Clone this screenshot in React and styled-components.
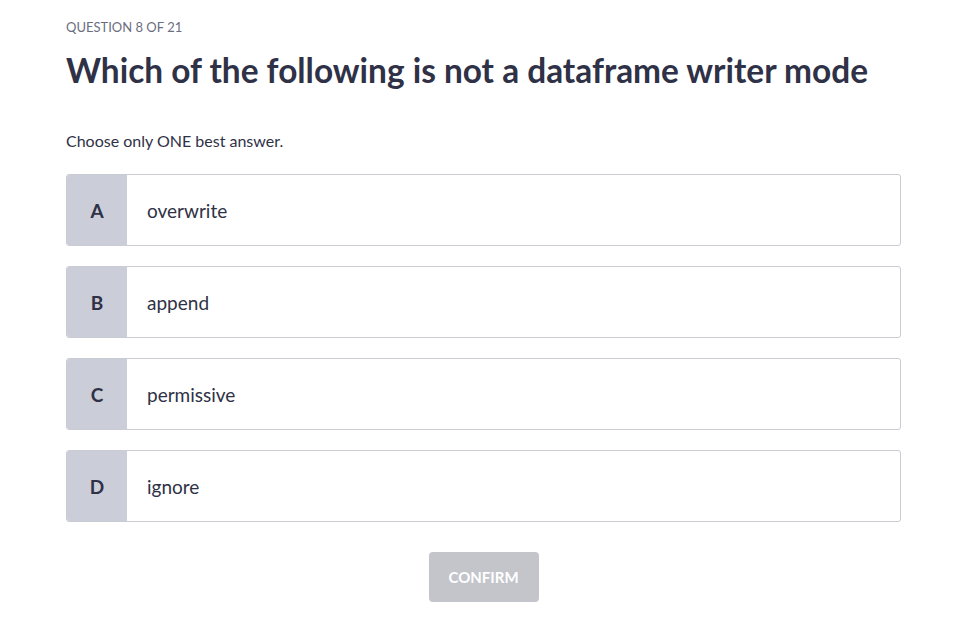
import React, { useState } from 'react';
import styled, { createGlobalStyle } from 'styled-components';

const GlobalStyle = createGlobalStyle`
  body {
    margin: 0;
    background: #ffffff;
    font-family: Lato, "Noto Sans", sans-serif;
  }
`;

const Page = styled.div`
  width: 835px;
  padding: 18px 0 0 66px;
`;

const Counter = styled.div`
  font-size: 13px;
  color: #6b6e80;
  text-transform: uppercase;
  line-height: 18px;
`;

const Title = styled.h1`
  margin: 14px 0 0;
  font-size: 33.4px;
  font-weight: 700;
  color: #2f3146;
  line-height: 40px;
`;

const Hint = styled.p`
  margin: 41px 0 0;
  font-size: 16px;
  color: #2f3146;
  line-height: 20px;
`;

const Options = styled.div`
  display: flex;
  flex-direction: column;
  gap: 20px;
  margin-top: 23px;
`;

const Option = styled.button`
  display: flex;
  align-items: stretch;
  height: 72px;
  padding: 0;
  border: 1px solid #c9cbd5;
  border-radius: 3px;
  background: ${p => (p.selected ? '#eef0f7' : '#ffffff')};
  overflow: hidden;
  cursor: pointer;
  font-family: inherit;
  text-align: left;
`;

const Letter = styled.span`
  display: flex;
  align-items: center;
  justify-content: center;
  width: 60px;
  background: #cbcdd8;
  font-size: 19px;
  font-weight: 700;
  color: #2f3146;
`;

const Label = styled.span`
  display: flex;
  align-items: center;
  padding-left: 20px;
  font-size: 19px;
  color: #2f3146;
`;

const Footer = styled.div`
  display: flex;
  justify-content: center;
  margin-top: 30px;
`;

const ConfirmButton = styled.button`
  width: 110px;
  height: 50px;
  border: none;
  border-radius: 4px;
  background: #c4c5cb;
  color: #ffffff;
  font-family: inherit;
  font-size: 15px;
  font-weight: 700;
  text-transform: uppercase;
`;

const answers = [
  { key: 'A', text: 'overwrite' },
  { key: 'B', text: 'append' },
  { key: 'C', text: 'permissive' },
  { key: 'D', text: 'ignore' },
];

const App = () => {
  const [selected, setSelected] = useState(null);

  return (
    <>
      <GlobalStyle />
      <Page>
        <Counter>Question 8 of 21</Counter>
        <Title>Which of the following is not a dataframe writer mode</Title>
        <Hint>Choose only ONE best answer.</Hint>
        <Options>
          {answers.map(a => (
            <Option key={a.key} selected={selected === a.key} onClick={() => setSelected(a.key)}>
              <Letter>{a.key}</Letter>
              <Label>{a.text}</Label>
            </Option>
          ))}
        </Options>
        <Footer>
          <ConfirmButton disabled={!selected}>Confirm</ConfirmButton>
        </Footer>
      </Page>
    </>
  );
};

export default App;
